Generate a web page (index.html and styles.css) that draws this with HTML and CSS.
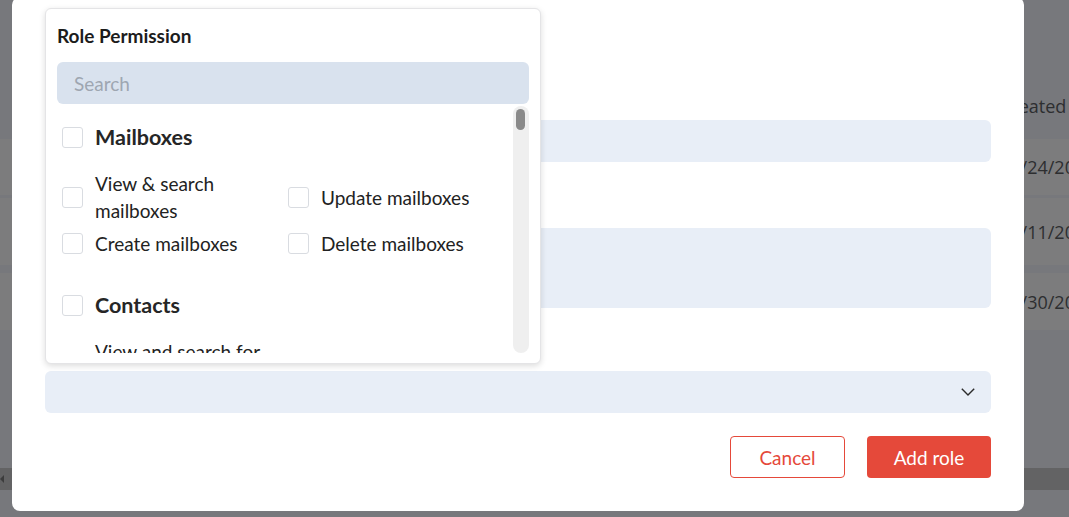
FILE: index.html
```html
<!DOCTYPE html>
<html lang="en">
<head>
<meta charset="utf-8">
<title>Add role</title>
<link rel="stylesheet" href="styles.css">
</head>
<body>
<div class="page">
  <div class="table">
    <div class="thead"><span>Created</span></div>
    <div class="trow r1"><span>11/24/2023</span></div>
    <div class="trow r2"><span>10/11/2023</span></div>
    <div class="trow r3"><span>09/30/2023</span></div>
  </div>
  <div class="hscroll"><span class="arrow"></span></div>
</div>

<div class="modal">
  <div class="group">
    <div class="field"></div>
  </div>
  <div class="group g2">
    <div class="field area"></div>
  </div>
  <div class="group g3">
    <div class="field select">
      <svg class="chev" width="14" height="8" viewBox="0 0 14 8"><polyline points="0.8,0.8 7,7 13.2,0.8" fill="none" stroke="#2b2b2b" stroke-width="1.4"/></svg>
    </div>
  </div>
  <div class="actions">
    <button class="btn ghost">Cancel</button>
    <button class="btn solid">Add role</button>
  </div>
</div>

<div class="popover">
  <div class="pop-title">Role Permission</div>
  <div class="search">Search</div>
  <div class="scroll">
    <div class="list">
      <div class="perm-section">
        <div class="perm-head"><span class="cb"></span>Mailboxes</div>
        <div class="perm-grid">
          <div class="perm"><span class="cb"></span><span class="txt">View &amp; search mailboxes</span></div>
          <div class="perm"><span class="cb"></span><span class="txt">Update mailboxes</span></div>
          <div class="perm"><span class="cb"></span><span class="txt">Create mailboxes</span></div>
          <div class="perm"><span class="cb"></span><span class="txt">Delete mailboxes</span></div>
        </div>
      </div>
      <div class="perm-section">
        <div class="perm-head"><span class="cb"></span>Contacts</div>
        <div class="perm-grid">
          <div class="perm"><span class="cb"></span><span class="txt">View and search for contacts</span></div>
          <div class="perm"><span class="cb"></span><span class="txt">Update contacts</span></div>
        </div>
      </div>
    </div>
    <div class="track"><div class="thumb"></div></div>
  </div>
</div>
</body>
</html>
```

FILE: styles.css
```css
html, body {
  margin: 0;
  padding: 0;
}
body {
  width: 1069px;
  height: 517px;
  overflow: hidden;
  background: #77787c;
  font-family: Lato, "Open Sans", sans-serif;
  position: relative;
}

/* underlying page (dimmed) */
.page {
  font-family: "Open Sans", "DejaVu Sans", sans-serif;
  color: #2d2e30;
  font-size: 18px;
}
.thead, .trow {
  display: flex;
  align-items: center;
  padding-left: 1000px;
}
.thead {
  height: 139px;
  align-items: flex-end;
  box-sizing: border-box;
  padding-bottom: 21px;
}
.trow {
  background: #7c7c7d;
}
.r1 { height: 56px; }
.r2 { height: 67px; margin-top: 3px; }
.r3 { height: 57px; margin-top: 8px; }
.thead span, .trow span {
  white-space: nowrap;
  line-height: 24px;
}
.hscroll {
  margin-top: 138px;
  height: 22px;
  background: #636364;
  display: flex;
  align-items: center;
}
.arrow {
  width: 0;
  height: 0;
  border-top: 4px solid transparent;
  border-bottom: 4px solid transparent;
  border-right: 4px solid #3c3c3c;
}

/* modal */
.modal {
  position: absolute;
  left: 12px;
  top: -3px;
  width: 1012px;
  height: 514px;
  box-sizing: border-box;
  background: #fff;
  border-radius: 8px;
  padding: 123px 33px 0;
  display: flex;
  flex-direction: column;
}
.group {
  display: flex;
  flex-direction: column;
}
.g2 { margin-top: 66px; }
.g3 { margin-top: 63px; }
.field {
  height: 42px;
  background: #e8eef7;
  border-radius: 6px;
}
.field.area { height: 80px; }
.field.select {
  display: flex;
  align-items: center;
  justify-content: flex-end;
  padding-right: 16px;
}
.chev { display: block; }
.actions {
  margin-top: 23px;
  display: flex;
  justify-content: flex-end;
  gap: 22px;
}
.btn {
  height: 42px;
  border-radius: 4px;
  font-family: Lato, "Open Sans", sans-serif;
  font-size: 19px;
  box-sizing: border-box;
  cursor: pointer;
}
.ghost {
  width: 115px;
  background: #fff;
  color: #e5493a;
  border: 1.5px solid #e5493a;
}
.solid {
  width: 124px;
  background: #e5493a;
  color: #fff;
  border: none;
}

/* popover */
.popover {
  position: absolute;
  left: 45px;
  top: 8px;
  width: 496px;
  height: 356px;
  box-sizing: border-box;
  background: #fff;
  border: 1px solid #e4e4e6;
  border-radius: 6px;
  box-shadow: 0 2px 6px rgba(0, 0, 0, 0.14);
  padding: 15px 11px 0;
}
.pop-title {
  font-size: 19px;
  line-height: 24px;
  font-weight: 700;
  color: #1c1c1c;
}
.search {
  margin-top: 14px;
  height: 42px;
  background: #d9e2ee;
  border-radius: 6px;
  padding-left: 17px;
  display: flex;
  align-items: center;
  font-size: 19px;
  color: #9ea6b1;
}
.scroll {
  margin-top: 2px;
  height: 247px;
  display: flex;
}
.list {
  flex: 1;
  overflow: hidden;
  padding: 16px 0 0 5px;
}
.track {
  width: 16px;
  box-sizing: border-box;
  background: #efefef;
  border-radius: 8px;
  padding: 3px 4px 0 3px;
}
.thumb {
  height: 21px;
  background: #8a8a8a;
  border-radius: 5px;
}
.perm-section + .perm-section {
  margin-top: 33px;
}
.perm-head {
  display: flex;
  align-items: center;
  gap: 12px;
  height: 30px;
  font-size: 21.5px;
  font-weight: 700;
  color: #262626;
}
.perm-grid {
  display: grid;
  grid-template-columns: 226px 1fr;
  row-gap: 6px;
  margin-top: 18px;
}
.perm {
  display: flex;
  align-items: center;
  gap: 12px;
  font-size: 19px;
  line-height: 27px;
  color: #222;
}
.txt {
  max-width: 190px;
}
.cb {
  width: 21px;
  height: 21px;
  box-sizing: border-box;
  border: 1.5px solid #d9dce1;
  border-radius: 3px;
  background: #fff;
  flex: none;
}
```
